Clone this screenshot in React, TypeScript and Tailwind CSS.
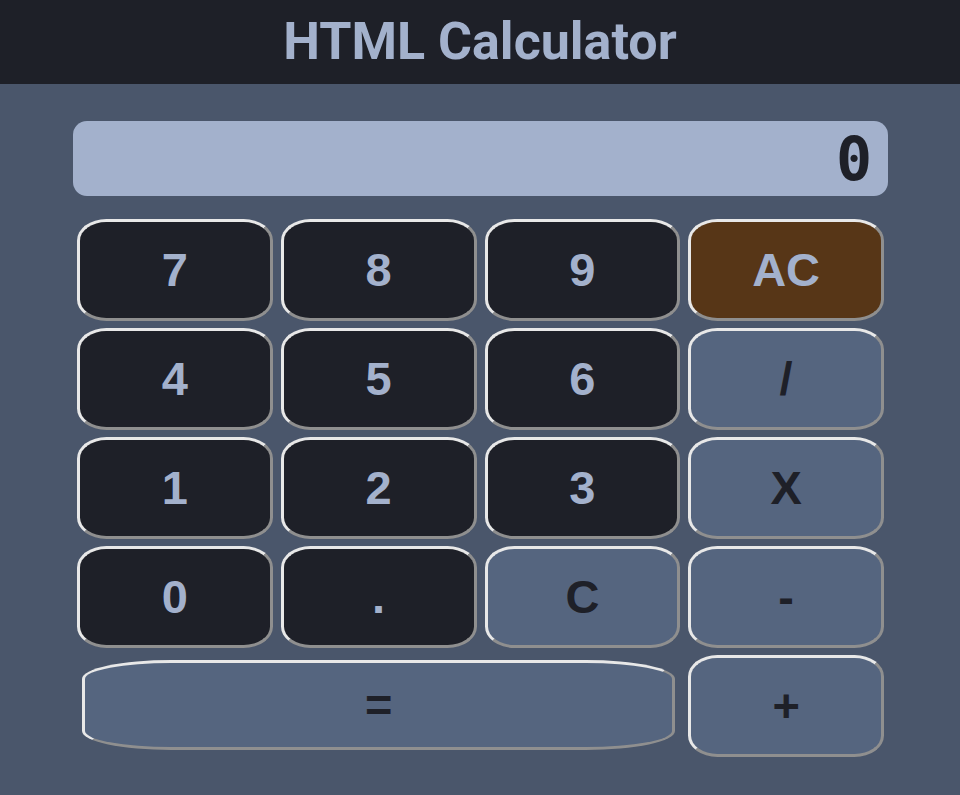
import React, { useState } from 'react';

type Key = {
  label: string;
  kind: 'num' | 'op' | 'clear';
  wide?: boolean;
};

const keys: Key[] = [
  { label: '7', kind: 'num' },
  { label: '8', kind: 'num' },
  { label: '9', kind: 'num' },
  { label: 'AC', kind: 'clear' },
  { label: '4', kind: 'num' },
  { label: '5', kind: 'num' },
  { label: '6', kind: 'num' },
  { label: '/', kind: 'op' },
  { label: '1', kind: 'num' },
  { label: '2', kind: 'num' },
  { label: '3', kind: 'num' },
  { label: 'X', kind: 'op' },
  { label: '0', kind: 'num' },
  { label: '.', kind: 'num' },
  { label: 'C', kind: 'op' },
  { label: '-', kind: 'op' },
  { label: '=', kind: 'op', wide: true },
  { label: '+', kind: 'op' },
];

const kindClass = {
  num: 'bg-[#1e2028] text-[#a3b1cc]',
  op: 'bg-[#55657f] text-[#1e2028]',
  clear: 'bg-[#573617] text-[#a3b1cc]',
};

function App() {
  const [display, setDisplay] = useState('0');

  const onKey = (label: string) => () => {
    if (label === 'AC') setDisplay('0');
    else if (label === 'C') setDisplay((d) => (d.length > 1 ? d.slice(0, -1) : '0'));
    else if (label === '=') {
      try {
        // eslint-disable-next-line no-new-func
        const v = Function(`return (${display.replace(/X/g, '*')})`)();
        setDisplay(String(v));
      } catch {
        setDisplay('0');
      }
    } else setDisplay((d) => (d === '0' && label !== '.' ? label : d + label));
  };

  return (
    <div className="min-h-screen bg-[#4a566b]">
      <header className="flex h-[84px] items-center justify-center bg-[#1e2028]">
        <h1 className="font-['Roboto',sans-serif] text-[52px] font-bold text-[#a3b1cc]">
          HTML Calculator
        </h1>
      </header>
      <main className="pl-[73px] pr-[72px] pt-[37px]">
        <div className="flex h-[75px] items-center justify-end rounded-[14px] bg-[#a3b1cc] pr-[16px] font-['DejaVu_Sans_Mono',monospace] text-[60px] font-bold text-[#1e2028]">
          {display}
        </div>
        <div className="mx-1 mt-[23px] grid grid-cols-4 gap-x-2 gap-y-[7px]">
          {keys.map((k) => (
            <button
              key={k.label}
              type="button"
              onClick={onKey(k.label)}
              className={`flex items-center justify-center rounded-[15%/21%] border-[3px] border-t-[#e8e8e8] border-l-[#e8e8e8] border-r-[#8f8f8f] border-b-[#8f8f8f] font-['Liberation_Sans',Arial,sans-serif] text-[47px] font-bold ${kindClass[k.kind]} ${k.wide ? 'col-span-3 m-[5px] h-[90px]' : 'h-[102px]'}`}
            >
              {k.label}
            </button>
          ))}
        </div>
      </main>
    </div>
  );
}

export default App;
